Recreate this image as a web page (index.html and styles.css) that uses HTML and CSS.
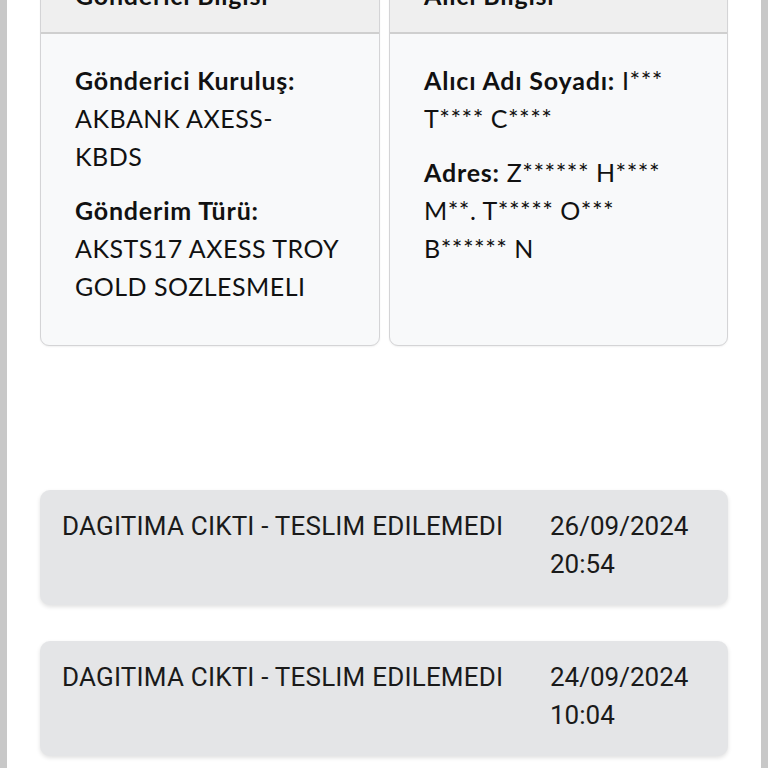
FILE: index.html
```html
<!DOCTYPE html>
<html lang="tr">
<head>
<meta charset="utf-8">
<title>Gönderi Takip</title>
<link rel="stylesheet" href="styles.css">
</head>
<body>
<div class="frame">
  <div class="content">
    <div class="cards">
      <section class="card">
        <header class="card-head">Gönderici Bilgisi</header>
        <div class="card-body">
          <p class="field"><b>Gönderici Kuruluş:</b> AKBANK AXESS-<br>KBDS</p>
          <p class="field"><b>Gönderim Türü:</b> AKSTS17 AXESS TROY GOLD SOZLESMELI</p>
        </div>
      </section>
      <section class="card">
        <header class="card-head">Alıcı Bilgisi</header>
        <div class="card-body">
          <p class="field"><b>Alıcı Adı Soyadı:</b> I*** T**** C****</p>
          <p class="field"><b>Adres:</b> Z****** H**** M**. T***** O*** B****** N</p>
        </div>
      </section>
    </div>
    <div class="events">
      <div class="event">
        <div class="event-text">DAGITIMA CIKTI - TESLIM EDILEMEDI</div>
        <div class="event-date">26/09/2024 20:54</div>
      </div>
      <div class="event">
        <div class="event-text">DAGITIMA CIKTI - TESLIM EDILEMEDI</div>
        <div class="event-date">24/09/2024 10:04</div>
      </div>
    </div>
  </div>
</div>
</body>
</html>
```

FILE: styles.css
```css
html, body {
  margin: 0;
  padding: 0;
  background: #ffffff;
}
body {
  overflow: hidden;
  height: 768px;
}
.frame {
  display: flow-root;
  border-left: 7px solid #c8c8c8;
  border-right: 7px solid #c8c8c8;
  height: 768px;
  box-sizing: border-box;
  background: #ffffff;
  overflow: hidden;
}
.content {
  margin-top: -34px;
  padding: 0 33px;
}
.cards {
  display: grid;
  grid-template-columns: 340px 339px;
  column-gap: 9px;
}
.card {
  border: 1.5px solid #d4d4d6;
  border-radius: 9px;
  background: #f8f9fa;
  overflow: hidden;
  box-shadow: 0 1px 2px rgba(0,0,0,0.06);
}
.card-head {
  font-family: "Lato", "Noto Sans", sans-serif;
  font-weight: 700;
  font-size: 25px;
  letter-spacing: 0.8px;
  line-height: 38px;
  color: #111;
  background: #efefef;
  padding: 9px 34px 18px;
  border-bottom: 2px solid #cfcfcf;
  height: 38px;
  overflow: hidden;
}
.card-body {
  padding: 27px 28px 40px 34px;
}
.field {
  margin: 0 0 16px;
  font-family: "Lato", "Noto Sans", sans-serif;
  font-size: 25px;
  letter-spacing: 0.5px;
  line-height: 38px;
  color: #111;
}
.field:last-child {
  margin-bottom: 0;
}
.field b {
  font-weight: 700;
  letter-spacing: 0.8px;
}
.events {
  margin-top: 144px;
  display: flex;
  flex-direction: column;
  gap: 36px;
}
.event {
  display: grid;
  grid-template-columns: 1fr 156px;
  background: #e4e5e7;
  border-radius: 10px;
  padding: 17px 22px 22px;
  box-shadow: 0 2px 4px rgba(0,0,0,0.12);
  font-family: "Roboto", "Liberation Sans", sans-serif;
  font-size: 26px;
  line-height: 38px;
  color: #1a1a1a;
}
.event-text {
  letter-spacing: 0.2px;
}
```
